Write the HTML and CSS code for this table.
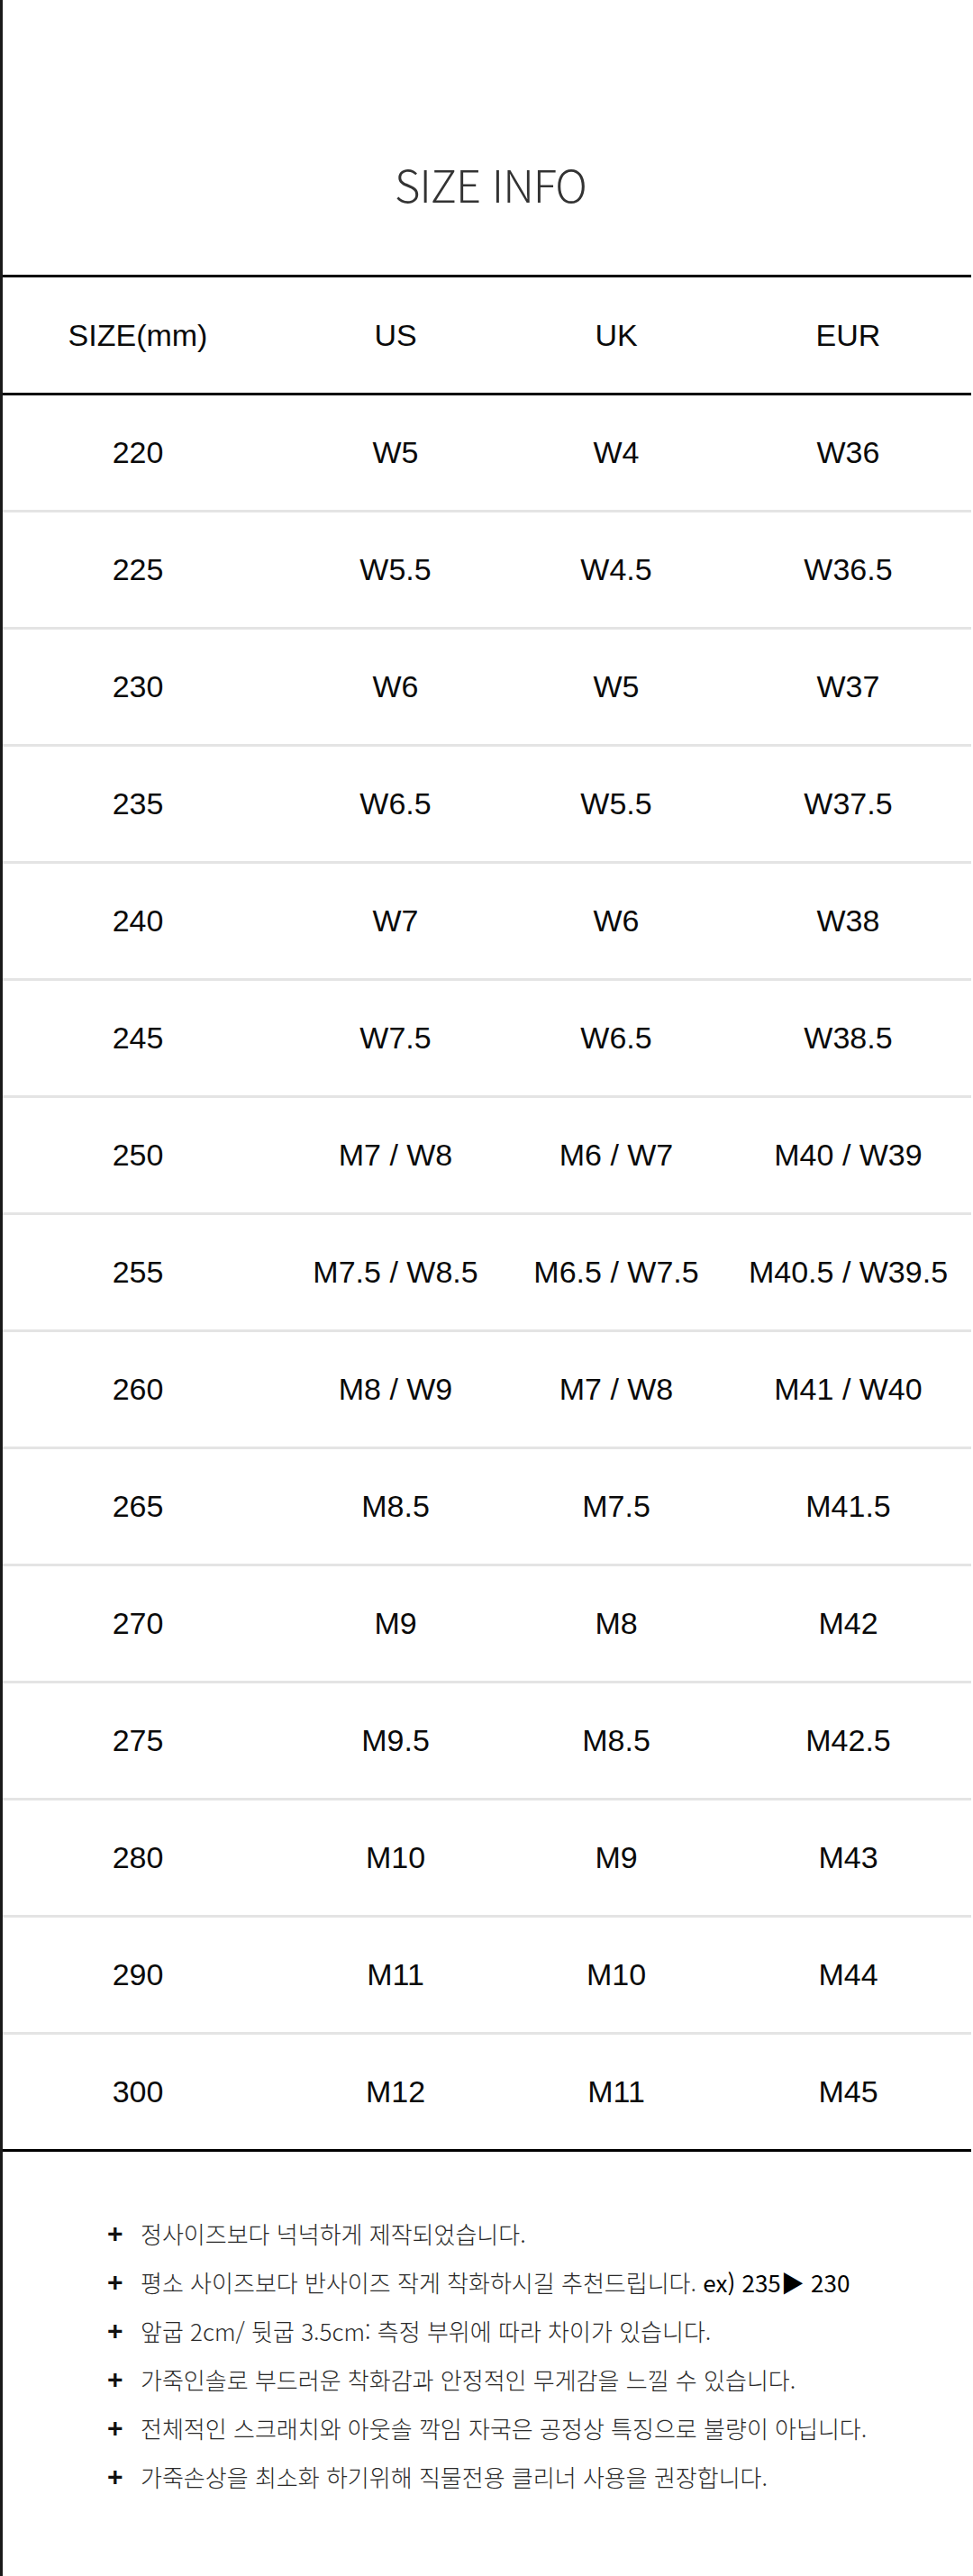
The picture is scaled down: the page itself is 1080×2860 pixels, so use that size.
FILE: index.html
```html
<!DOCTYPE html>
<html lang="ko">
<head>
<meta charset="utf-8">
<title>SIZE INFO</title>
<link rel="stylesheet" href="styles.css">
</head>
<body>
<div class="page">
  <h1 class="title">SIZE INFO</h1>
  <table class="size-table">
    <colgroup>
      <col class="c1"><col class="c2"><col class="c3"><col class="c4">
    </colgroup>
    <thead>
      <tr><th>SIZE(mm)</th><th>US</th><th>UK</th><th class="eur">EUR</th></tr>
    </thead>
    <tbody>
      <tr><td>220</td><td>W5</td><td>W4</td><td class="eur">W36</td></tr>
      <tr><td>225</td><td>W5.5</td><td>W4.5</td><td class="eur">W36.5</td></tr>
      <tr><td>230</td><td>W6</td><td>W5</td><td class="eur">W37</td></tr>
      <tr><td>235</td><td>W6.5</td><td>W5.5</td><td class="eur">W37.5</td></tr>
      <tr><td>240</td><td>W7</td><td>W6</td><td class="eur">W38</td></tr>
      <tr><td>245</td><td>W7.5</td><td>W6.5</td><td class="eur">W38.5</td></tr>
      <tr><td>250</td><td>M7 / W8</td><td>M6 / W7</td><td class="eur">M40 / W39</td></tr>
      <tr><td>255</td><td>M7.5 / W8.5</td><td>M6.5 / W7.5</td><td class="eur">M40.5 / W39.5</td></tr>
      <tr><td>260</td><td>M8 / W9</td><td>M7 / W8</td><td class="eur">M41 / W40</td></tr>
      <tr><td>265</td><td>M8.5</td><td>M7.5</td><td class="eur">M41.5</td></tr>
      <tr><td>270</td><td>M9</td><td>M8</td><td class="eur">M42</td></tr>
      <tr><td>275</td><td>M9.5</td><td>M8.5</td><td class="eur">M42.5</td></tr>
      <tr><td>280</td><td>M10</td><td>M9</td><td class="eur">M43</td></tr>
      <tr><td>290</td><td>M11</td><td>M10</td><td class="eur">M44</td></tr>
      <tr class="last"><td>300</td><td>M12</td><td>M11</td><td class="eur">M45</td></tr>
    </tbody>
  </table>
  <ul class="notes">
    <li><span class="plus">+</span><span class="txt">정사이즈보다 넉넉하게 제작되었습니다.</span></li>
    <li><span class="plus">+</span><span class="txt">평소 사이즈보다 반사이즈 작게 착화하시길 추천드립니다. <b class="ex">ex) 235▶ 230</b></span></li>
    <li><span class="plus">+</span><span class="txt">앞굽 2cm/ 뒷굽 3.5cm: 측정 부위에 따라 차이가 있습니다.</span></li>
    <li><span class="plus">+</span><span class="txt">가죽인솔로 부드러운 착화감과 안정적인 무게감을 느낄 수 있습니다.</span></li>
    <li><span class="plus">+</span><span class="txt">전체적인 스크래치와 아웃솔 깍임 자국은 공정상 특징으로 불량이 아닙니다.</span></li>
    <li><span class="plus">+</span><span class="txt">가죽손상을 최소화 하기위해 직물전용 클리너 사용을 권장합니다.</span></li>
  </ul>
</div>
</body>
</html>
```
FILE: styles.css
```css
html, body {
  margin: 0;
  padding: 0;
  background: #ffffff;
}
.page {
  width: 1077px;
  min-height: 2860px;
  border-left: 3px solid #1a1a1a;
  box-sizing: content-box;
}
.title {
  margin: 0;
  height: 305px;
  box-sizing: border-box;
  padding-top: 176px;
  text-align: center;
  font-family: "Noto Sans CJK KR", "Open Sans", sans-serif;
  font-weight: 300;
  font-size: 49px;
  line-height: 56px;
  letter-spacing: -1px;
  color: #333333;
  padding-left: 6px;
}
.size-table {
  width: 1075px;
  border-collapse: separate;
  border-spacing: 0;
  table-layout: fixed;
  font-family: "Liberation Sans", Arial, sans-serif;
  font-size: 34px;
  color: #0a0a0a;
}
.c1 { width: 300px; }
.c2 { width: 272px; }
.c3 { width: 218px; }
.c4 { width: 285px; }
.size-table th,
.size-table td {
  padding: 0;
  text-align: center;
  font-weight: 400;
  white-space: nowrap;
}
.size-table .eur {
  padding-left: 12px;
}
.size-table th {
  height: 128px;
  border-top: 3px solid #000000;
  border-bottom: 3px solid #000000;
}
.size-table td {
  height: 127px;
  border-bottom: 3px solid #e4e4e4;
}
.size-table tr.last td {
  border-bottom-color: #000000;
}
.notes {
  list-style: none;
  margin: 0;
  padding: 64px 0 0 116px;
  font-family: "Noto Sans CJK KR", sans-serif;
  font-weight: 300;
  font-size: 26px;
  line-height: 54px;
  color: #2a2a2a;
}
.notes li {
  display: flex;
  align-items: center;
  height: 54px;
}
.plus {
  width: 37px;
  flex: none;
  font-family: "Liberation Sans", Arial, sans-serif;
  font-weight: 700;
  font-size: 30px;
  color: #111111;
}
.txt {
  letter-spacing: 0;
  white-space: nowrap;
}
.ex {
  font-weight: 400;
  color: #000000;
}
```
